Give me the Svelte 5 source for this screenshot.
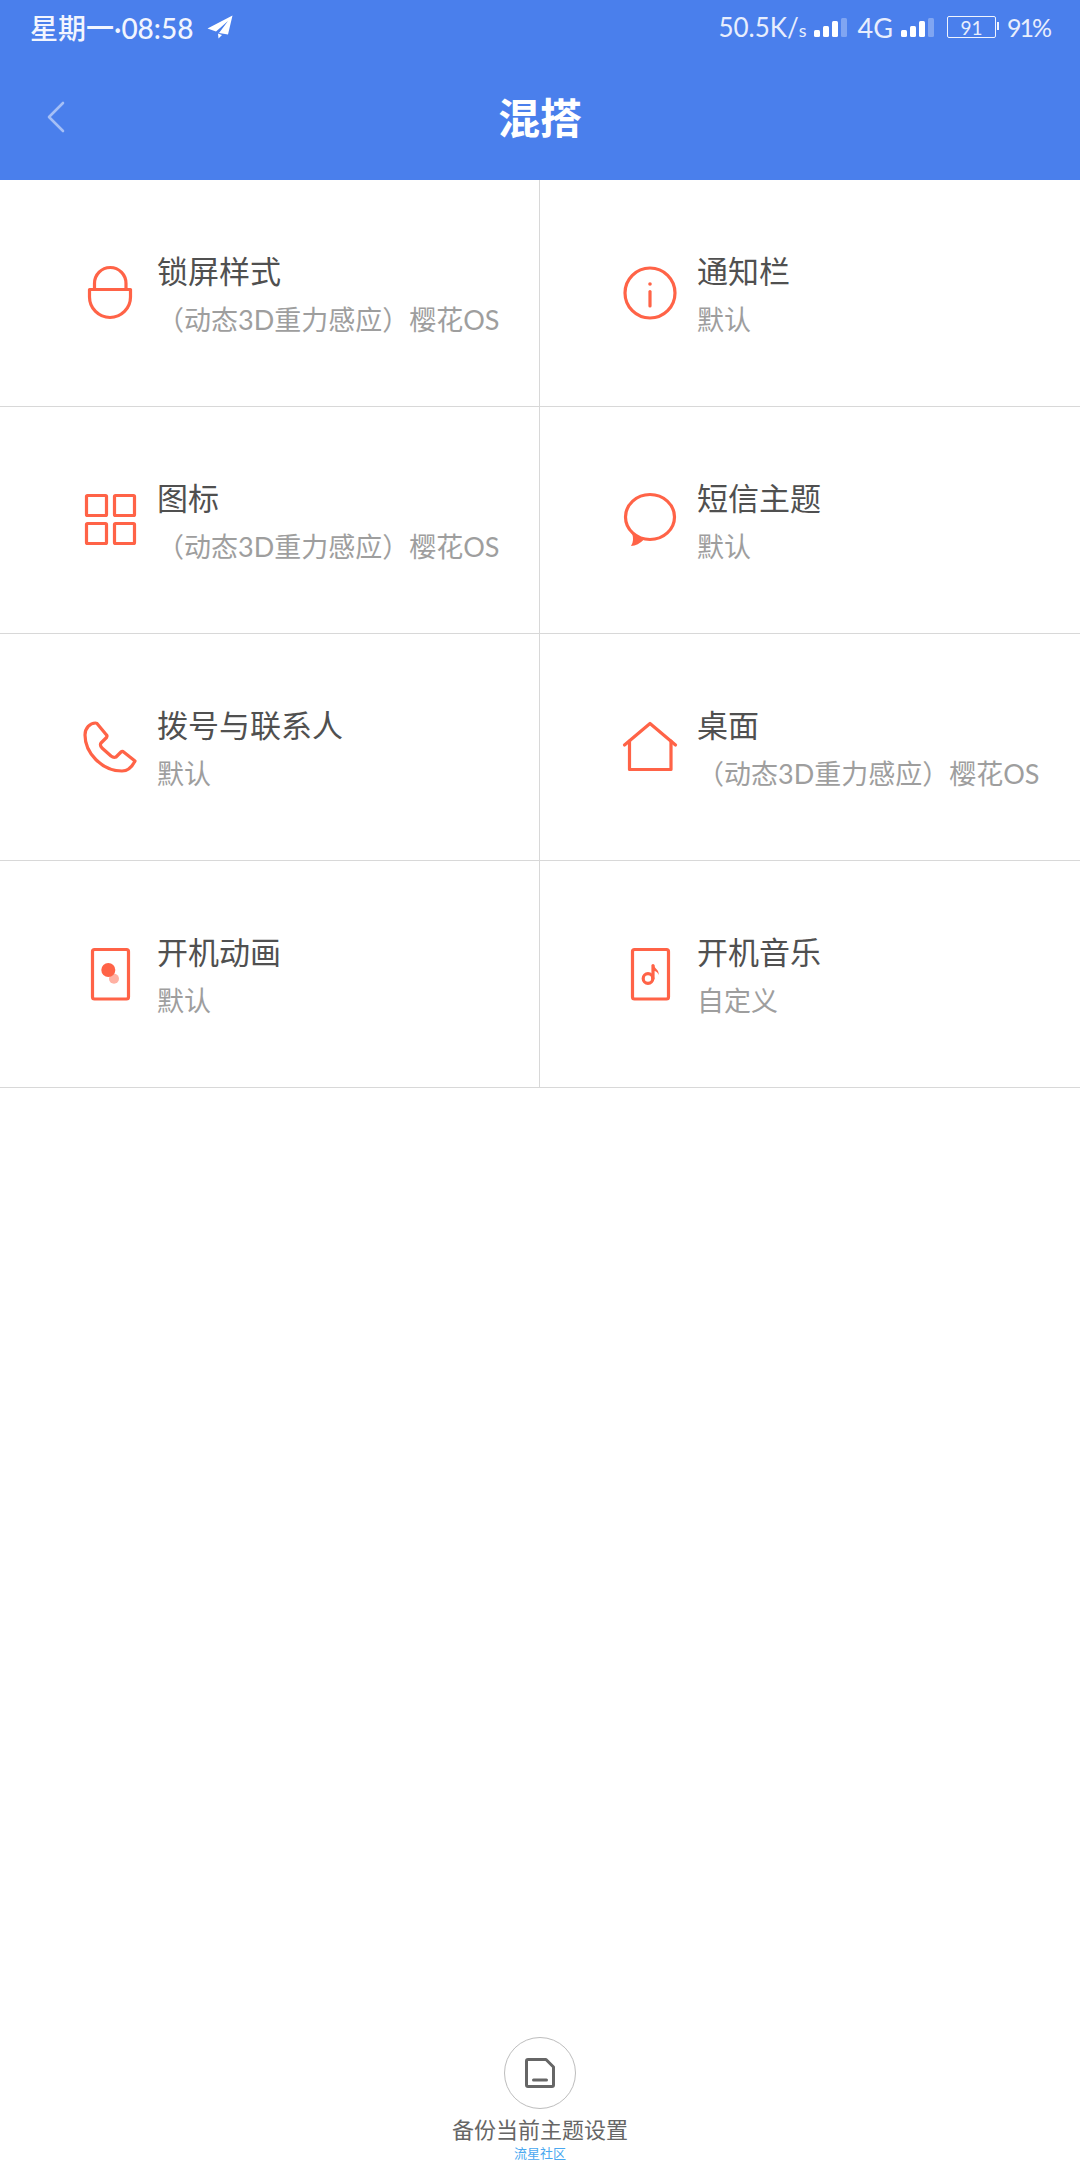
<script>
  const items = [
    { icon: 'lock', title: '锁屏样式', sub: '（动态3D重力感应）樱花OS' },
    { icon: 'info', title: '通知栏', sub: '默认' },
    { icon: 'grid', title: '图标', sub: '（动态3D重力感应）樱花OS' },
    { icon: 'chat', title: '短信主题', sub: '默认' },
    { icon: 'phone', title: '拨号与联系人', sub: '默认' },
    { icon: 'home', title: '桌面', sub: '（动态3D重力感应）樱花OS' },
    { icon: 'boot', title: '开机动画', sub: '默认' },
    { icon: 'music', title: '开机音乐', sub: '自定义' }
  ];
  const bars = [7, 11, 16, 19];
</script>

{#snippet signal()}
  <span class="signal">
    {#each bars as h, i}
      <i class:dim={i === 3} style="height: {h}px"></i>
    {/each}
  </span>
{/snippet}

<div class="page">
  <header>
    <div class="status">
      <div class="left">
        <span>星期一·08:58</span>
        <svg class="plane" width="26" height="24" viewBox="0 0 26 24">
          <path d="M25.5 0.5 0.5 13.5 9 16.5 21 6 12 18 21 19.5Z" fill="#fff" />
          <path d="M11 18.5 15 20 11.5 23.5Z" fill="#fff" />
        </svg>
      </div>
      <div class="right">
        <span class="speed">50.5K/<small>s</small></span>
        {@render signal()}
        <span class="net">4G</span>
        {@render signal()}
        <span class="battery"><b>91</b></span>
        <span class="pct">91%</span>
      </div>
    </div>
    <div class="nav">
      <svg class="back" width="18" height="32" viewBox="0 0 18 32">
        <path d="M16 2 2 16 16 30" fill="none" stroke="#fff" stroke-opacity=".5" stroke-width="2.6" stroke-linecap="round" stroke-linejoin="round" />
      </svg>
      <h1>混搭</h1>
    </div>
  </header>

  <main class="grid">
    {#each items as item}
      <div class="cell">
        <svg class="icon" width="60" height="60" viewBox="0 0 60 60" fill="none" stroke="#ff6347" stroke-width="3.2" stroke-linejoin="round" stroke-linecap="round">
          {#if item.icon === 'lock'}
            <path d="M9.5 26.5H50.5V34A20.5 20.5 0 0 1 9.5 34Z" />
            <path d="M14.5 26V20.5A15.75 16 0 0 1 46 20.5V26" />
          {:else if item.icon === 'info'}
            <circle cx="30" cy="30" r="25" />
            <path d="M30 28.5V43" />
            <circle cx="30" cy="21" r="1.8" fill="#ff6347" stroke="none" />
          {:else if item.icon === 'grid'}
            <rect x="6.5" y="5.5" width="20" height="20" rx="1" />
            <rect x="34.5" y="5.5" width="20" height="20" rx="1" />
            <rect x="6.5" y="33.5" width="20" height="20" rx="1" />
            <rect x="34.5" y="33.5" width="20" height="20" rx="1" />
          {:else if item.icon === 'chat'}
            <ellipse cx="30" cy="27" rx="24.5" ry="22.5" />
            <path d="M12 43Q14.5 51 11 56Q18 55.5 24 49.5Z" fill="#ff6347" stroke="none" />
          {:else if item.icon === 'phone'}
            <path d="M15.5 6C10 6 5 11 5 18C5 36 22 54 42 54C47 54 52 50 55 44L43 34.5Q42 34 41 35L36 40Q33.5 41 31 39L22 31Q19.5 28 21 26L26.5 20.5Q27.5 19 26.5 18L17 6.5Q16 6 15.5 6Z" />
          {:else if item.icon === 'home'}
            <path d="M4.5 28 30 6.5 55.5 28" />
            <path d="M9.5 24V52.5H51V24" />
          {:else if item.icon === 'boot'}
            <rect x="12.5" y="5.5" width="36" height="49.5" rx="2" />
            <circle cx="34" cy="34.7" r="5" fill="#ff6347" fill-opacity=".5" stroke="none" />
            <circle cx="28.3" cy="26" r="7" fill="#ff6347" stroke="none" />
          {:else}
            <rect x="12.5" y="5.5" width="36" height="49.5" rx="2" />
            <circle cx="28" cy="34.5" r="4.8" />
            <path d="M33 34.5V21.5" />
            <path d="M34 21C34.5 25 39.5 25.5 38.5 31C37.5 28 36 27 34 27Z" fill="#ff6347" stroke="none" />
          {/if}
        </svg>
        <div class="text">
          <div class="title">{item.title}</div>
          <div class="sub">{item.sub}</div>
        </div>
      </div>
    {/each}
  </main>

  <footer>
    <div class="backup">
      <svg width="36" height="36" viewBox="0 0 36 36" fill="none" stroke="#666" stroke-width="3" stroke-linejoin="round" stroke-linecap="round">
        <path d="M6 4.5H24L31.5 12V30Q31.5 31.5 30 31.5H6Q4.5 31.5 4.5 30V6Q4.5 4.5 6 4.5Z" />
        <path d="M11.5 25H24.5" />
      </svg>
    </div>
    <div class="label">备份当前主题设置</div>
    <div class="mark">流星社区</div>
  </footer>
</div>

<style>
  :global(body) {
    margin: 0;
    background: #fff;
  }

  .page {
    width: 1080px;
    height: 2160px;
    display: flex;
    flex-direction: column;
    overflow: hidden;
    font-family: Lato, "Noto Sans CJK SC", sans-serif;
  }

  header {
    background: #4a7fec;
    color: #fff;
  }

  .status {
    height: 54px;
    padding: 0 30px;
    display: flex;
    align-items: center;
    justify-content: space-between;
    font-size: 28px;
  }

  .left {
    display: flex;
    align-items: center;
    gap: 14px;
    color: #f2f5fe;
    font-weight: 500;
  }

  .right {
    display: flex;
    align-items: center;
    color: #e8eefd;
    font-size: 26px;
  }

  .speed small {
    font-size: 18px;
  }

  .signal {
    display: flex;
    align-items: flex-end;
    gap: 3px;
    height: 19px;
    margin-left: 7px;
  }

  .signal i {
    width: 6px;
    background: #fff;
    border-radius: 1.5px;
  }

  .signal i.dim {
    background: rgba(255, 255, 255, 0.3);
  }

  .net {
    margin: 0 1px 0 11px;
    font-size: 27px;
  }

  .battery {
    position: relative;
    box-sizing: border-box;
    width: 49px;
    height: 22px;
    margin-left: 13px;
    border: 1.5px solid #f0f4fe;
    border-radius: 2px;
    display: flex;
    align-items: center;
    justify-content: center;
    font-size: 19px;
  }

  .battery b {
    font-weight: 400;
  }

  .battery::after {
    content: "";
    position: absolute;
    right: -4px;
    top: 5px;
    width: 2px;
    height: 8px;
    background: #f0f4fe;
  }

  .pct {
    margin-left: 11px;
    font-size: 25px;
    letter-spacing: -2px;
  }

  .nav {
    position: relative;
    height: 126px;
    display: flex;
    align-items: center;
    justify-content: center;
  }

  .back {
    position: absolute;
    left: 47px;
    top: 47px;
  }

  h1 {
    margin: -4px 0 0;
    font-size: 42px;
    font-weight: 700;
  }

  .grid {
    display: grid;
    grid-template-columns: 540px 540px;
    grid-auto-rows: 227px;
  }

  .cell {
    box-sizing: border-box;
    padding: 0 0 1px 80px;
    display: flex;
    align-items: center;
    gap: 17px;
    border-bottom: 1px solid #d8d8d8;
  }

  .cell:nth-child(odd) {
    border-right: 1px solid #d8d8d8;
  }

  .icon {
    flex: none;
  }

  .text {
    white-space: nowrap;
    margin-top: 4px;
  }

  .title {
    font-size: 31px;
    line-height: 40px;
    color: #505050;
  }

  .sub {
    font-size: 27px;
    line-height: 36px;
    margin-top: 11px;
    color: #9e9e9e;
  }

  footer {
    margin-top: auto;
    display: flex;
    flex-direction: column;
    align-items: center;
  }

  .backup {
    box-sizing: border-box;
    width: 72px;
    height: 72px;
    border: 1.5px solid #bdbdbd;
    border-radius: 50%;
    display: flex;
    align-items: center;
    justify-content: center;
  }

  .label {
    margin-top: 5px;
    font-size: 22px;
    line-height: 32px;
    color: #666;
  }

  .mark {
    margin-top: 1px;
    font-size: 13px;
    line-height: 13px;
    color: #4aa8f0;
  }
</style>
